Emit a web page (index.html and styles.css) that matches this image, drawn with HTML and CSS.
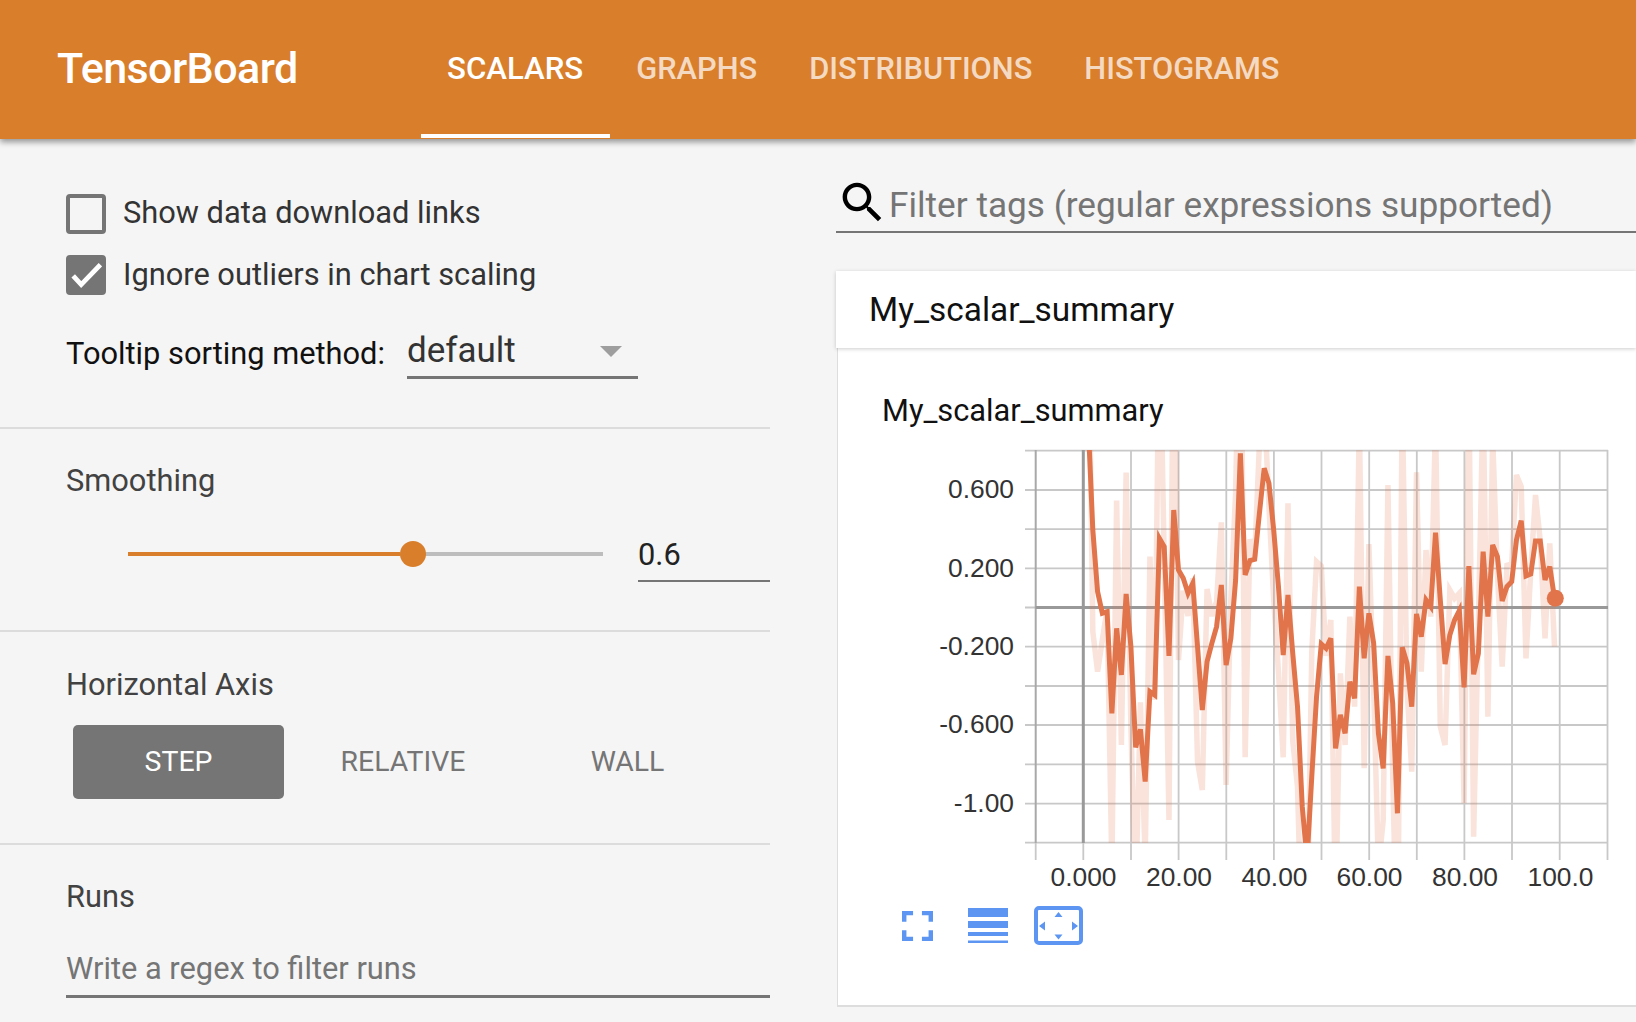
FILE: index.html
```html
<!DOCTYPE html>
<html lang="en">
<head>
<meta charset="utf-8">
<title>TensorBoard</title>
<link rel="stylesheet" href="styles.css">
</head>
<body>
<header class="topbar">
  <div class="brand">TensorBoard</div>
  <nav class="tabs">
    <a class="tab tab-active">SCALARS</a>
    <a class="tab">GRAPHS</a>
    <a class="tab">DISTRIBUTIONS</a>
    <a class="tab">HISTOGRAMS</a>
  </nav>
</header>
<div class="main">
  <aside class="sidebar">
    <section class="options">
      <label class="check-row"><span class="box"></span><span class="check-text">Show data download links</span></label>
      <label class="check-row check-row-two"><span class="box box-on"><svg class="tick" viewBox="0 0 40 40"><path d="M4 21l10 11L38 7" /></svg></span><span class="check-text">Ignore outliers in chart scaling</span></label>
      <div class="sort-row">
        <span class="sort-label">Tooltip sorting method:</span>
        <div class="select"><span>default</span><span class="caret"></span></div>
      </div>
    </section>
    <section class="smoothing">
      <h3 class="heading">Smoothing</h3>
      <div class="slider-row">
        <div class="slider"><div class="slider-fill"></div><div class="slider-rest"></div><div class="knob"></div></div>
        <div class="slider-value">0.6</div>
      </div>
    </section>
    <section class="axis">
      <h3 class="heading">Horizontal Axis</h3>
      <div class="axis-buttons">
        <div class="axis-btn axis-btn-on">STEP</div>
        <div class="axis-btn">RELATIVE</div>
        <div class="axis-btn">WALL</div>
      </div>
    </section>
    <section class="runs">
      <h3 class="heading">Runs</h3>
      <div class="runs-input">Write a regex to filter runs</div>
    </section>
  </aside>
  <main class="content">
    <div class="filter">
      <svg class="search" viewBox="0 0 24 24"><path d="M15.5 14h-.79l-.28-.27C15.41 12.59 16 11.11 16 9.5 16 5.91 13.09 3 9.5 3S3 5.91 3 9.5 5.91 16 9.5 16c1.61 0 3.09-.59 4.23-1.57l.27.28v.79l5 4.99L20.49 19l-4.99-5zm-6 0C7.01 14 5 11.99 5 9.5S7.01 5 9.5 5 14 7.01 14 9.500 11.99 14 9.5 14z"/></svg>
      <span class="filter-text">Filter tags (regular expressions supported)</span>
    </div>
    <div class="card-head">My_scalar_summary</div>
    <div class="card-body">
      <div class="chart-title">My_scalar_summary</div>
      <svg class="chart" viewBox="930 440 706 460">
        <defs><clipPath id="plot"><rect x="1025" y="450" width="583" height="393"/></clipPath></defs>
        <path class="grid" d="M1025 450.7H1608M1025 490H1608M1025 529.1H1608M1025 568.3H1608M1025 607.5H1608M1025 646.7H1608M1025 686H1608M1025 725H1608M1025 764.4H1608M1025 803.7H1608M1025 842.7H1608"/>
        <path class="grid" d="M1131 450V860M1178.6 450V860M1226.3 450V860M1273.9 450V860M1321.5 450V860M1369.2 450V860M1416.8 450V860M1464.4 450V860M1512 450V860M1559.7 450V860M1607.5 450V860"/>
        <path class="grid-mid" d="M1035.7 450V843"/>
        <path class="grid" d="M1035.7 843V860M1083.3 843V860"/>
        <path class="axis-line" d="M1035.7 607.5H1608M1083.3 450V843"/>
        <g clip-path="url(#plot)">
          <g transform="translate(1083.3 440) scale(4.76 0.3333)">
            <polyline class="raw" points="0,-900 1,-500 2,575 3,695 4,600 5,507 6,1278 7,182 8,915 9,98 10,857 11,1375 12,787 13,1260 14,350 15,780 16,-410 17,358 18,1140 19,-447 20,660 21,452 22,528 23,415 24,965 25,1050 26,447 27,528 28,485 29,247 30,1035 31,475 32,158 33,-530 34,952 35,298 36,352 37,13 38,-118 39,198 40,480 41,695 42,952 43,190 44,903 45,1040 46,1550 47,1500 48,635 49,365 50,378 51,648 52,540 53,1420 54,700 55,915 56,530 57,800 58,-62 59,985 60,312 61,745 62,1285 63,1142 64,135 65,1003 66,1615 67,-125 68,742 69,995 70,97 71,695 72,330 73,530 74,-55 75,860 76,915 77,450 78,475 79,460 80,1090 81,-168 82,1190 83,546 84,-123 85,830 86,-8 87,403 88,680 89,376 90,372 91,105 92,140 93,655 94,393 95,165 96,303 97,595 98,310 99,620"/>
            <polyline class="smooth" points="0,-900 1,-60 2,270 3,455 4,520 5,515 6,820 7,565 8,705 9,462 10,620 11,922 12,868 13,1025 14,755 15,765 16,295 17,320 18,648 19,210 20,390 21,415 22,460 23,430 24,620 25,810 26,665 27,610 28,560 29,435 30,675 31,595 32,420 33,40 34,405 35,362 36,358 37,220 38,85 39,130 40,270 41,440 42,645 43,465 44,640 45,800 46,1100 47,1260 48,1010 49,770 50,612 51,625 52,595 53,925 54,825 55,880 56,725 57,775 58,440 59,655 60,520 61,610 62,880 63,985 64,648 65,790 66,1120 67,622 68,670 69,800 70,522 71,590 72,480 73,500 74,278 75,480 76,672 77,585 78,540 79,512 80,742 81,378 82,703 83,640 84,335 85,530 86,315 87,350 88,483 89,440 90,425 91,300 92,242 93,408 94,402 95,303 96,303 97,420 98,380 99,475"/>
          </g>
        </g>
        <circle class="dot" cx="1555.3" cy="598.3" r="8.5"/>
        <g class="y-labels">
          <text x="1014" y="498">0.600</text>
          <text x="1014" y="577">0.200</text>
          <text x="1014" y="655">-0.200</text>
          <text x="1014" y="733">-0.600</text>
          <text x="1014" y="812">-1.00</text>
        </g>
        <g class="x-labels">
          <text x="1083.5" y="886">0.000</text>
          <text x="1179" y="886">20.00</text>
          <text x="1274.5" y="886">40.00</text>
          <text x="1369.5" y="886">60.00</text>
          <text x="1465" y="886">80.00</text>
          <text x="1560.5" y="886">100.0</text>
        </g>
      </svg>
      <div class="chart-tools">
        <svg class="tool-full" viewBox="5 5 14 14" preserveAspectRatio="none"><path d="M7 14H5v5h5v-2H7v-3zm-2-4h2V7h3V5H5v5zm12 7h-3v2h5v-5h-2v3zM14 5v2h3v3h2V5h-5z"/></svg>
        <svg class="tool-lines" viewBox="0 0 40 35"><rect y="0" width="40" height="9"/><rect y="13" width="40" height="7"/><rect y="24" width="40" height="4"/><rect y="32.5" width="40" height="2.5"/></svg>
        <svg class="tool-fit" viewBox="0 0 49 39"><rect class="fit-frame" x="2" y="2" width="45" height="35" rx="3"/><path d="M24.5 6l4 5h-8zM24.5 33.500l4-5h-8zM5 20l6-4.500v9zM44 20l-6-4.500v9z"/></svg>
      </div>
    </div>
  </main>
</div>
</body>
</html>
```
FILE: styles.css
```css
* { box-sizing: border-box; }
html, body { margin: 0; padding: 0; }
body {
  width: 1636px;
  height: 1022px;
  overflow: hidden;
  background: #f5f5f5;
  font-family: Roboto, "Liberation Sans", sans-serif;
  color: #333;
}

.topbar {
  position: relative;
  z-index: 2;
  display: flex;
  height: 139px;
  background: #d97e2b;
  box-shadow: 0 3px 6px rgba(0, 0, 0, 0.4);
}
.brand {
  width: 421px;
  padding-left: 57px;
  line-height: 136px;
  font-size: 43px;
  font-weight: 500;
  letter-spacing: -0.55px;
  color: #fff;
}
.tabs { display: flex; }
.tab {
  height: 138px;
  padding: 0 26px;
  line-height: 138px;
  font-size: 30.800px;
  font-weight: 500;
  color: rgba(255, 255, 255, 0.72);
}
.tab-active {
  padding-right: 27px;
  font-size: 31.200px;
  color: #fff;
  border-bottom: 4px solid #fff;
}

.main { display: flex; }
.sidebar { width: 770px; flex: none; }
.sidebar section { border-bottom: 2px solid #dcdcdc; }
.sidebar section:last-child { border-bottom: 0; }

.options { height: 290px; padding: 55px 0 0 66px; }
.check-row {
  display: flex;
  align-items: center;
  gap: 17px;
  height: 40px;
  font-size: 30.800px;
  color: #333;
}
.check-text { padding-bottom: 3px; }
.check-row-two { margin-top: 21px; }
.check-row-two .check-text { padding-bottom: 1px; }
.box {
  display: block;
  width: 40px;
  height: 40px;
  border: 4px solid #757575;
  border-radius: 4px;
}
.box-on { background: #757575; }
.tick { display: block; width: 32px; height: 32px; }
.tick path { fill: none; stroke: #fff; stroke-width: 6; }
.sort-row {
  display: flex;
  align-items: flex-start;
  margin-top: 35px;
}
.sort-label {
  width: 341px;
  line-height: 44px;
  margin-top: 2px;
  font-size: 30.800px;
  color: #111;
}
.select {
  display: flex;
  justify-content: space-between;
  width: 231px;
  height: 49px;
  padding: 0 16px 0 0;
  line-height: 42px;
  font-size: 35px;
  color: #333;
  border-bottom: 3px solid #757575;
}
.caret {
  width: 0;
  height: 0;
  margin-top: 16px;
  border-left: 11px solid transparent;
  border-right: 11px solid transparent;
  border-top: 11px solid #9e9e9e;
}

.heading {
  margin: 0;
  font-size: 30.800px;
  line-height: 40px;
  font-weight: 400;
  color: #424242;
}
.smoothing { height: 203px; padding: 32px 0 0 66px; }
.slider-row { display: flex; align-items: center; margin-top: 27px; height: 54px; }
.slider {
  position: relative;
  display: flex;
  align-items: center;
  width: 475px;
  height: 26px;
  margin: 0 0 2px 62px;
}
.slider-fill { width: 272px; height: 4px; background: #d97e2b; }
.slider-rest { flex: 1; height: 4px; background: #bdbdbd; }
.knob {
  position: absolute;
  left: 272px;
  top: 0;
  width: 26px;
  height: 26px;
  border-radius: 50%;
  background: #d97e2b;
}
.slider-value {
  width: 132px;
  height: 54px;
  margin-left: 35px;
  line-height: 54px;
  font-size: 30.800px;
  color: #222;
  border-bottom: 2px solid #757575;
}

.axis { height: 213px; padding: 33px 0 0 66px; }
.axis-buttons { display: flex; margin-top: 20px; }
.axis-btn {
  width: 211px;
  height: 74px;
  margin: 0 6.500px 0 7px;
  border-radius: 5px;
  line-height: 74px;
  text-align: center;
  font-size: 28.400px;
  color: #757575;
}
.axis-btn-on { background: #757575; color: #fff; }

.runs { padding: 32px 0 0 66px; }
.runs-input {
  height: 60px;
  margin-top: 21px;
  line-height: 62px;
  font-size: 30.800px;
  color: #757575;
  border-bottom: 3px solid #757575;
}

.content { flex: 1; padding: 0 0 0 66px; min-width: 0; }
.filter {
  display: flex;
  align-items: center;
  height: 94px;
  padding-top: 34px;
  font-size: 35.200px;
  color: #757575;
  border-bottom: 2px solid #757575;
  white-space: nowrap;
}
.filter-text { padding-top: 6px; }
.search {
  flex: none;
  width: 53px;
  height: 53px;
  fill: #000;
}
.card-head {
  position: relative;
  z-index: 1;
  height: 77px;
  margin-top: 38px;
  padding-left: 33px;
  background: #fff;
  line-height: 78px;
  font-size: 33.400px;
  color: #111;
  box-shadow: 0 1px 4px rgba(0, 0, 0, 0.2);
}
.card-body {
  height: 659px;
  margin-left: 1px;
  padding-top: 43px;
  background: #fff;
  border-left: 1px solid #ddd;
  border-bottom: 2px solid #ddd;
}
.chart-title {
  height: 40px;
  padding-left: 44px;
  line-height: 40px;
  font-size: 30.800px;
  color: #111;
}
.chart {
  display: block;
  width: 706px;
  height: 460px;
  margin: 9px 0 0 92px;
}
.grid { fill: none; stroke: #c8c8c8; stroke-width: 1.800; }
.grid-mid { fill: none; stroke: #a8a8a8; stroke-width: 2; }
.axis-line { fill: none; stroke: #999; stroke-width: 3; }
.raw, .smooth { fill: none; vector-effect: non-scaling-stroke; stroke-linejoin: miter; }
.raw { stroke: #e1744a; stroke-opacity: 0.2; stroke-width: 5.500; }
.smooth { stroke: #e1744a; stroke-width: 5; }
.dot { fill: #e1744a; }
.y-labels, .x-labels {
  font-family: "Liberation Sans", Arial, sans-serif;
  font-size: 26.400px;
  fill: #333;
}
.y-labels { text-anchor: end; }
.x-labels { text-anchor: middle; }
.chart-tools {
  display: flex;
  align-items: center;
  height: 39px;
  margin-top: 6px;
  padding-left: 64px;
}
.tool-full { width: 31px; height: 30px; fill: #5c96f2; }
.tool-lines { width: 40px; height: 35px; margin-left: 35px; fill: #5c96f2; }
.tool-fit { width: 49px; height: 39px; margin-left: 26px; fill: #5c96f2; }
.fit-frame { fill: none; stroke: #5c96f2; stroke-width: 4; }
```
